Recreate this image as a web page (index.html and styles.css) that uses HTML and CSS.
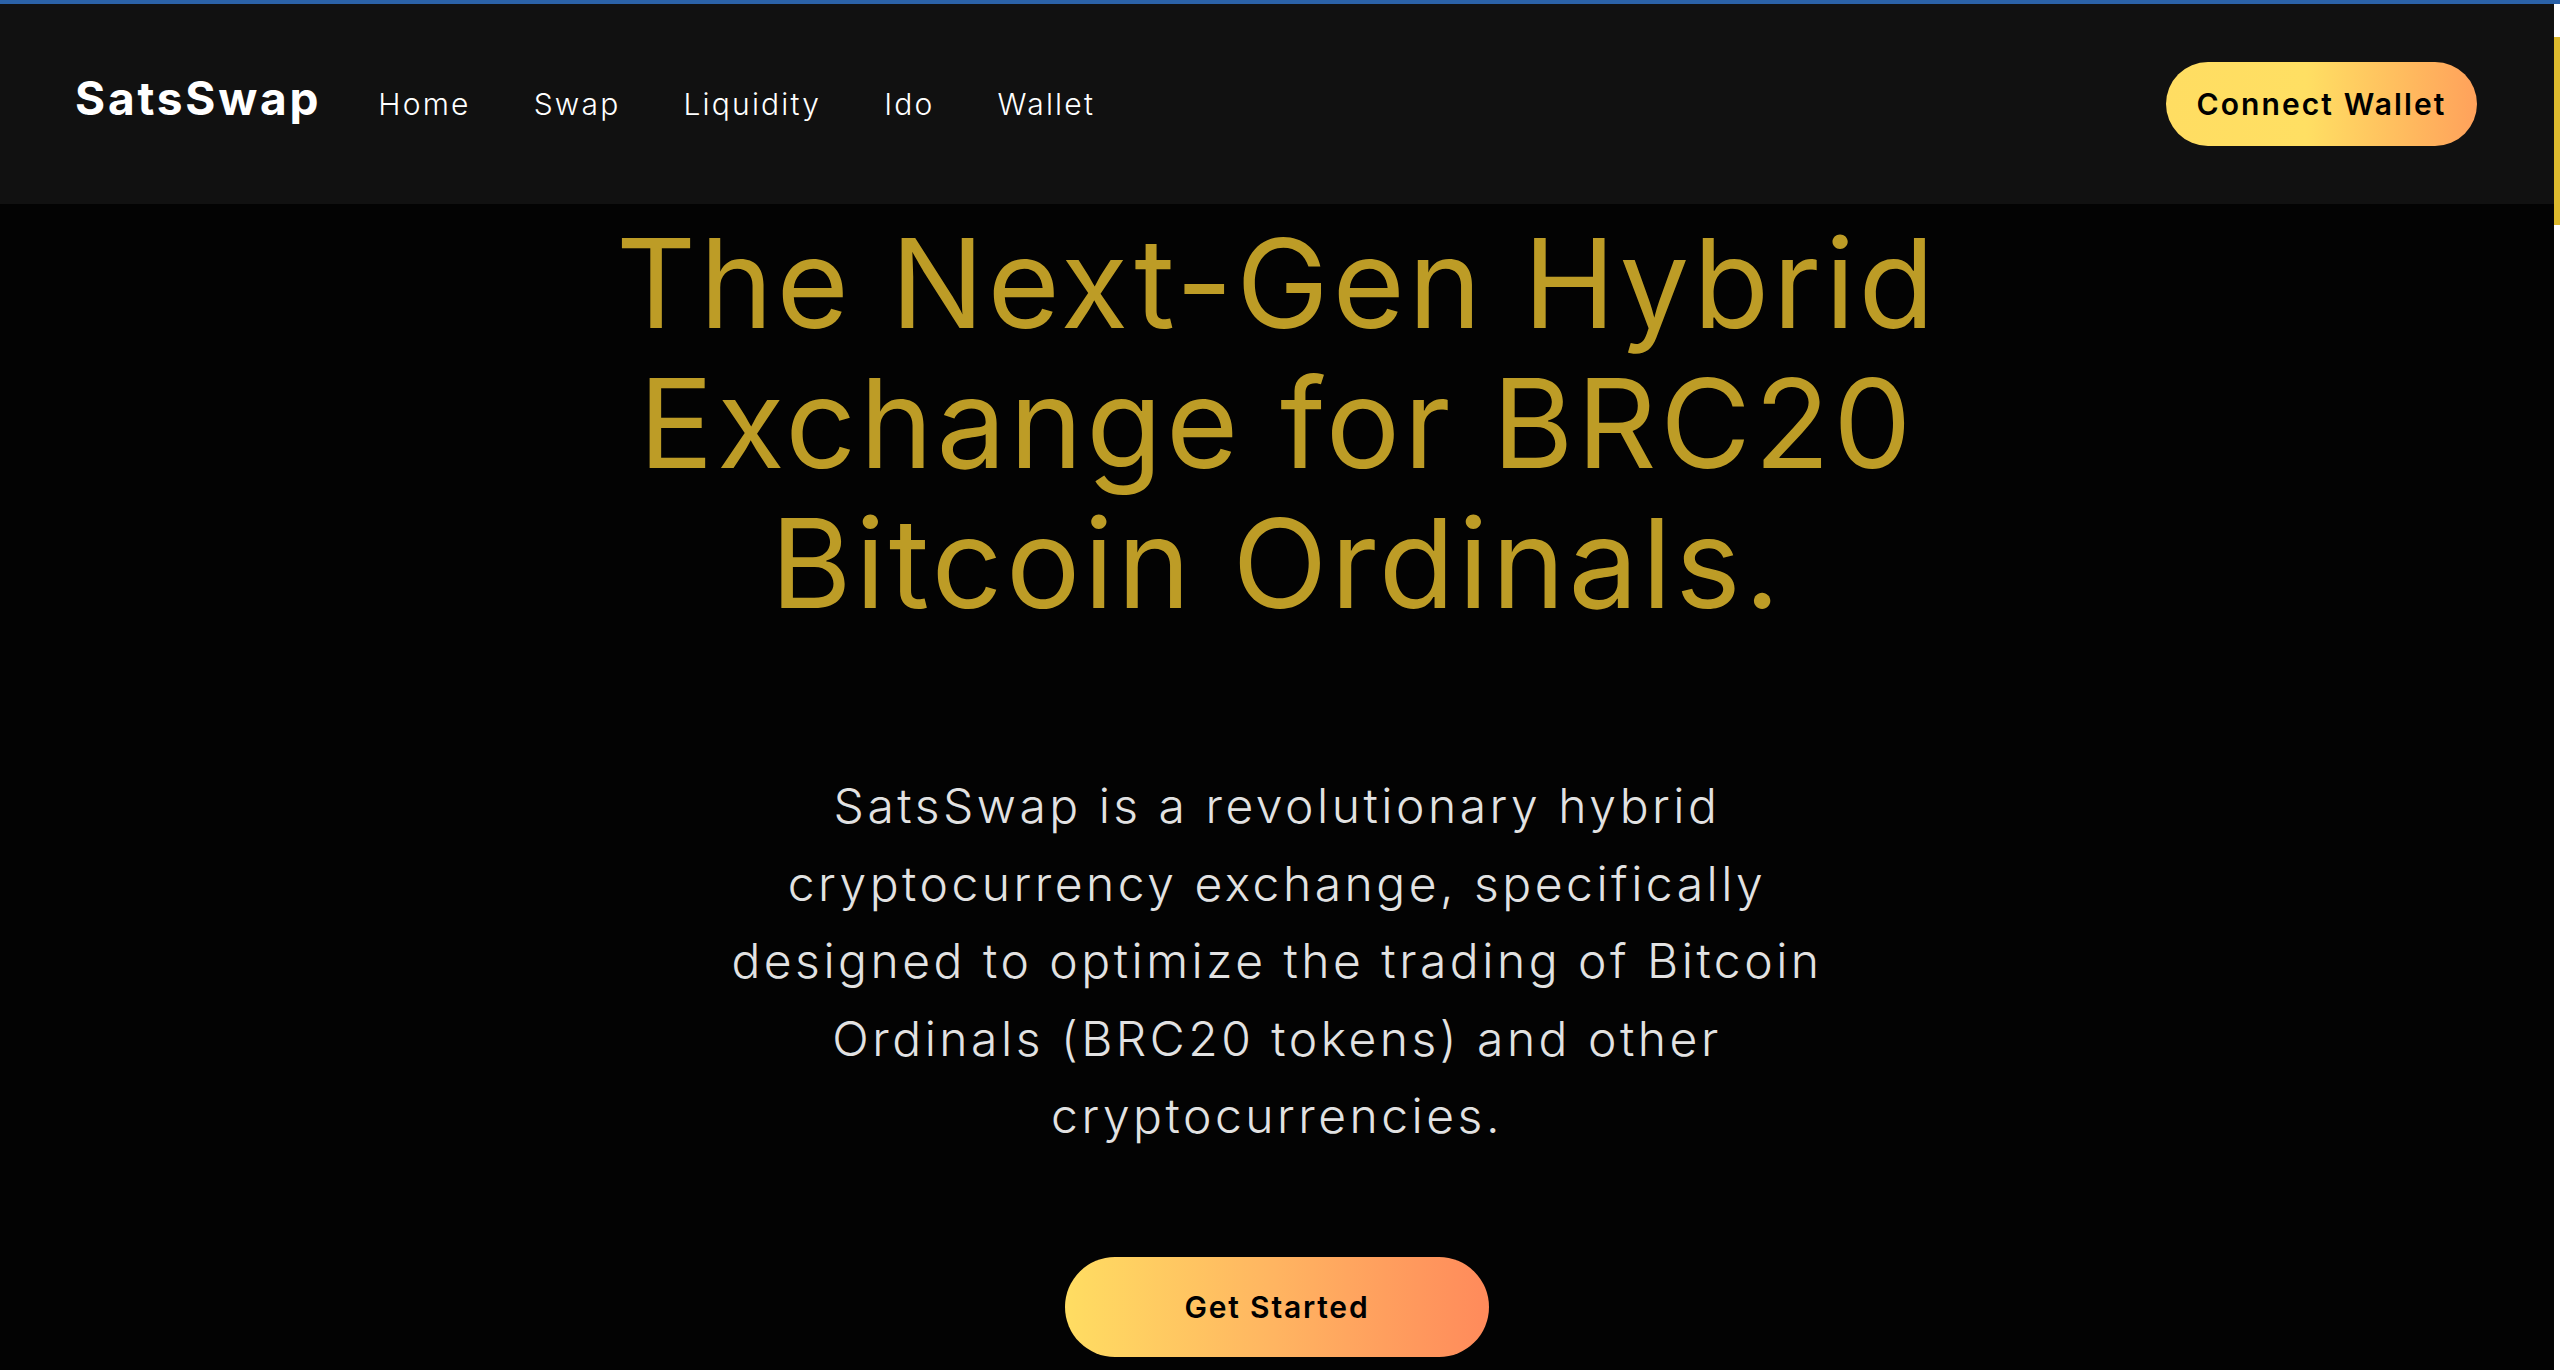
FILE: index.html
```html
<!DOCTYPE html>
<html lang="en">
<head>
<meta charset="utf-8">
<title>SatsSwap</title>
<link rel="stylesheet" href="styles.css">
</head>
<body>
<div class="topline"></div>
<div class="frame">
  <div class="main">
    <header class="header">
      <div class="brand">
        <div class="logo">SatsSwap</div>
        <nav class="nav">
          <a class="nav-link">Home</a>
          <a class="nav-link">Swap</a>
          <a class="nav-link">Liquidity</a>
          <a class="nav-link">Ido</a>
          <a class="nav-link">Wallet</a>
        </nav>
      </div>
      <button class="btn-connect">Connect Wallet</button>
    </header>
    <section class="hero">
      <h1 class="hero-title">The Next-Gen Hybrid<br>Exchange for BRC20<br>Bitcoin Ordinals.</h1>
      <p class="hero-text">SatsSwap is a revolutionary hybrid cryptocurrency exchange, specifically designed to optimize the trading of Bitcoin Ordinals (BRC20 tokens) and other cryptocurrencies.</p>
      <button class="btn-start">Get Started</button>
    </section>
  </div>
  <div class="scrollbar"><div class="thumb"></div></div>
</div>
</body>
</html>
```
FILE: styles.css
```css
html, body {
  margin: 0;
  padding: 0;
  height: 100%;
  overflow: hidden;
}
body {
  background: #030303;
  font-family: "Inter", "Noto Sans", sans-serif;
  color: #fff;
}
.topline {
  height: 4px;
  background: #2b62a8;
}
.frame {
  display: flex;
  height: 1366px;
}
.main {
  flex: 1;
  overflow: hidden;
  background: #030303;
}
.scrollbar {
  width: 6px;
  background: #ffffff;
  padding-top: 33px;
}
.thumb {
  height: 188px;
  background: #dcb92e;
}
.header {
  height: 200px;
  background: #111111;
  display: flex;
  align-items: center;
  justify-content: space-between;
  padding: 0 77px 0 75px;
}
.brand {
  display: flex;
  align-items: center;
}
.logo {
  font-size: 46px;
  font-weight: 700;
  letter-spacing: 2.8px;
  margin-right: 57px;
  margin-top: -12px;
}
.nav {
  display: flex;
  gap: 63px;
}
.nav-link {
  font-size: 30px;
  font-weight: 300;
  letter-spacing: 2.2px;
  color: #fff;
}
.btn-connect {
  width: 311px;
  height: 84px;
  border: none;
  border-radius: 42px;
  background: linear-gradient(90deg, #ffdd62 0%, #ffdf63 45%, #ffa15b 100%);
  font-family: "Inter", "Noto Sans", sans-serif;
  font-size: 30px;
  font-weight: 600;
  letter-spacing: 2.1px;
  color: #000;
  padding: 0;
}
.hero {
  display: flex;
  flex-direction: column;
  align-items: center;
  text-align: center;
}
.hero-title {
  margin: 9px 0 0;
  font-size: 124px;
  line-height: 140px;
  font-weight: 400;
  letter-spacing: 3.5px;
  color: #bd9c26;
}
.hero-text {
  margin: 134px 0 0;
  max-width: 1150px;
  font-size: 48px;
  line-height: 77.5px;
  font-weight: 300;
  letter-spacing: 3.5px;
  color: #e2e2e2;
}
.btn-start {
  margin-top: 102px;
  width: 424px;
  height: 100px;
  border: none;
  border-radius: 50px;
  background: linear-gradient(90deg, #ffdd62 0%, #ffb461 50%, #ff8a5b 100%);
  font-family: "Inter", "Noto Sans", sans-serif;
  font-size: 30px;
  font-weight: 600;
  letter-spacing: 1.8px;
  color: #000;
  padding: 0;
}
```
